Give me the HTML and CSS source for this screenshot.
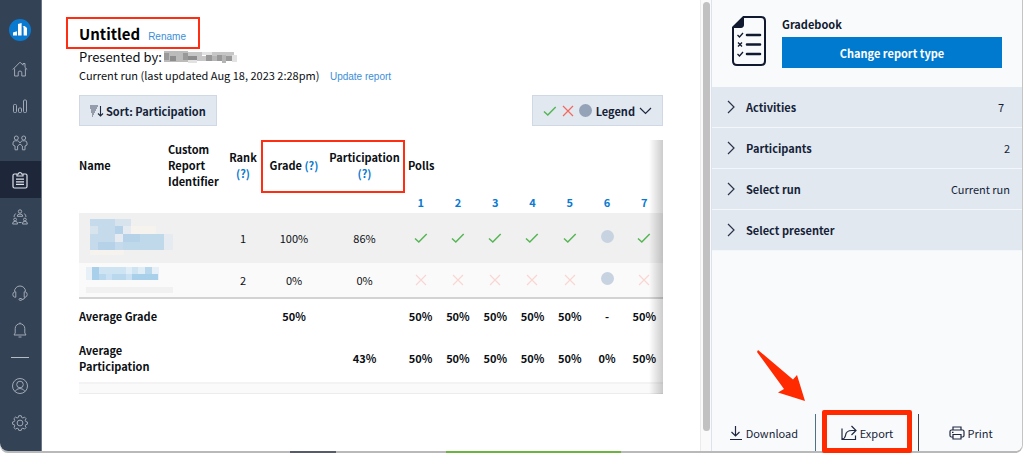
FILE: index.html
```html
<!DOCTYPE html>
<html lang="en">
<head>
  <meta charset="UTF-8" />
  <meta name="viewport" content="width=device-width, initial-scale=1.0" />
  <title>Gradebook report</title>
  <link rel="stylesheet" href="styles.css">
</head>
<body>
  <!-- shared icons -->
  <svg class="defs" aria-hidden="true">
    <symbol id="check" viewBox="0 0 14 14"><path d="M1 7.5 4.8 11 12.7 3" fill="none" stroke="#56b555" stroke-width="1.5"/></symbol>
    <symbol id="cross" viewBox="0 0 14 14"><path d="M2 2 12 12M12 2 2 12" fill="none" stroke="currentColor" stroke-width="1.2"/></symbol>
    <symbol id="chevron" viewBox="0 0 8 14"><path d="M1 1 7 7 1 13" fill="none" stroke="#2b3348" stroke-width="1.2"/></symbol>
  </svg>

  <div class="app">
    <nav class="sidebar">
      <a href="#" class="logo" aria-label="Home page">
        <svg viewBox="0 0 22 22" width="22" height="22"><circle cx="11" cy="11" r="11" fill="#0a7ad1"/><path d="M4 13.500 8 12.200V16.500H4zM9 5 12.600 4V16.500H9zM13.600 7.500l2-.5 2.400 2V16.500H14.600V8.500z" fill="#fff"/></svg>
      </a>
      <a href="#" aria-label="Home"><svg viewBox="0 0 16 16"><path d="M.8 8.500 8 1.200l3 3V2.500h2v4L15.200 8.500M2.600 7.500V15h3.600v-3.200a1.800 1.800 0 0 1 3.600 0V15h3.600V7.500"/></svg></a>
      <a href="#" aria-label="Activities"><svg viewBox="0 0 16 16"><rect x="1.500" y="6.500" width="3" height="8" rx="1"/><rect x="6.500" y="10" width="3" height="4.500" rx="1"/><rect x="11.500" y="2" width="3" height="12.500" rx="1"/></svg></a>
      <a href="#" aria-label="Participants"><svg viewBox="0 0 16 16"><circle cx="4.300" cy="3" r="2"/><circle cx="11.700" cy="3" r="2"/><path d="M3 14.800V11L1 10V8a2.200 2.200 0 0 1 2.200-2.200h2.400Q7 6 8 8q1-2 2.400-2.200h2.400A2.200 2.200 0 0 1 15 8v2l-2 1v3.800h-2.600V11L8 9l-2.400 2v3.800z"/></svg></a>
      <a href="#" class="active" aria-label="Reports"><svg viewBox="0 0 16 18" class="clipboard"><path d="M5 3H2.500Q1 3 1 4.500v11Q1 17 2.500 17h11q1.500 0 1.500-1.500v-11Q15 3 13.500 3H11M5 5V3h1.500a1.500 1.500 0 0 1 3 0H11v2zM4 8.200h8M4 10.800h8M4 13.400h8"/></svg></a>
      <a href="#" aria-label="Team"><svg viewBox="0 0 16 16"><circle cx="8" cy="2.500" r="1.700"/><path d="M5.200 7.300Q5.200 5 8 5t2.800 2.300zM.6 15q0-2.800 2.500-2.800T5.600 15zM10.400 15q0-2.800 2.500-2.800t2.500 2.800zM3.700 4.500Q2 6 2 8M12.300 4.500Q14 6 14 8M6.500 13.500h3"/><circle cx="3.100" cy="10.500" r="1.400"/><circle cx="12.900" cy="10.500" r="1.400"/></svg></a>
      <a href="#" class="push" aria-label="Support"><svg viewBox="0 0 16 16"><path d="M2.500 6.500a5.500 5.500 0 0 1 11 0M3.800 6.800v5.400h-1Q.8 11.800.8 9.500t2-2.700zM12.200 6.800v5.400h1q2-.4 2-2.700t-2-2.700zM13 12.200Q12.500 14.500 10 14.500"/><rect x="7" y="13.500" width="3" height="1.800" rx=".9"/></svg></a>
      <a href="#" aria-label="Notifications"><svg viewBox="0 0 16 16"><path d="M8 .5v1.300M2 13l1.200-2V6.500a4.800 4.800 0 0 1 9.600 0V11l1.200 2zM6.500 15h3"/></svg></a>
      <hr>
      <a href="#" aria-label="Account"><svg viewBox="0 0 16 16"><circle cx="8" cy="8" r="7.500"/><circle cx="8" cy="6.500" r="3.300"/><path d="M3 13.500q1.500-3 5-3t5 3"/></svg></a>
      <a href="#" aria-label="Settings"><svg viewBox="0 0 16 16"><circle cx="8" cy="8" r="2.900"/><path d="M6.800.7h2.400l.5 1.800 1.200.5 1.600-.9 1.600 1.600-.9 1.600.5 1.200 1.700.5v2.200l-1.700.5-.5 1.200.9 1.600-1.600 1.600-1.600-.9-1.200.5-.5 1.700H6.800l-.5-1.700-1.200-.5-1.600.9-1.600-1.600.9-1.600-.5-1.200-1.700-.5V7l1.700-.5.5-1.200-.9-1.600 1.600-1.600 1.600.9 1.200-.5z"/></svg></a>
    </nav>

    <main>
      <div class="title">
        <h1>Untitled</h1>
        <a href="#">Rename</a>
      </div>
      <p class="presenter">Presented by:
        <svg width="74" height="14" viewBox="0 0 74 14" aria-label="Hidden name"><path fill="#bbb" d="M0 1h24v11H0z"/><path fill="#999" d="M0 3h5v7H0zM19 3h5v7h-5z"/><path fill="#8d8d8d" d="M6 6h6v5H6zM24 6h9v4h-9z"/><path fill="#c6c6c6" d="M24 2h14v4H24zM33 6h9v5h-9zM48 2h22v4H48z"/><path fill="#999" d="M42 5h6v6h-6zM53 5h5v6h-5zM62 6h6v5h-6z"/><path fill="#b5b5b5" d="M48 6h5v5h-5zM58 5h4v8h-4z"/><path fill="#e2e2e2" d="M38 2h10v3H38zM68 5h5v7h-5zM24 10h9v3h-9z"/></svg>
      </p>
      <p class="run">Current run (last updated Aug 18, 2023 2:28pm) <a href="#">Update report</a></p>

      <div class="toolbar">
        <button type="button">
          <svg width="14" height="12" viewBox="0 0 14 12"><path d="M0 1h8M0 3h7M1 5h5M1 7h4M2 9h2M2 11h1" stroke="#4a5368" stroke-width="1.1"/><path d="M10.500 1v10M8 8.500l2.500 2.500L13 8.500" fill="none" stroke="#1f2840" stroke-width="1.100"/></svg>
          Sort: Participation
        </button>
        <button type="button" class="legend">
          <svg width="14" height="14"><use href="#check"/></svg>
          <svg width="14" height="14" class="red"><use href="#cross"/></svg>
          <span class="dot"></span>
          <span>Legend</span>
          <svg width="13" height="8" viewBox="0 0 13 8"><path d="M1 1 6.500 6.500 12 1" fill="none" stroke="#1f2840" stroke-width="1.200"/></svg>
        </button>
      </div>

      <div class="report">
        <table>
          <colgroup>
            <col class="c-name"><col class="c-id"><col class="c-rank"><col class="c-grade"><col class="c-part">
            <col span="7">
          </colgroup>
          <thead>
            <tr class="heads">
              <th class="left">Name</th>
              <th class="left">Custom Report Identifier</th>
              <th>Rank <a href="#">(?)</a></th>
              <th>Grade <a href="#">(?)</a></th>
              <th>Participation <a href="#">(?)</a></th>
              <th class="polls" colspan="7">Polls</th>
            </tr>
            <tr class="numbers">
              <td colspan="5"></td>
              <th><a href="#">1</a></th><th><a href="#">2</a></th><th><a href="#">3</a></th><th><a href="#">4</a></th><th><a href="#">5</a></th><th><a href="#">6</a></th><th><a href="#">7</a></th>
            </tr>
          </thead>
          <tbody>
            <tr class="first">
              <td colspan="2" class="left">
                <svg class="pixels" width="100" height="38" viewBox="0 0 100 38" aria-label="Hidden name"><path fill="#f6f2ee" d="M52 7h25v9H41V9h11zM11 31h34v5H11z"/><path fill="#c5dbeb" d="M11 0h33v31H11z"/><path fill="#d8e4ed" d="M36 0h16v7H36zM11 7h8v8h-8z"/><path fill="#e5ebf1" d="M36 15h8v8h-8zM85 15h9v16h-9zM44 7h8v8h-8z"/><path fill="#b5d2e8" d="M44 7h-8v8h8zM19 23h17v8H19zM44 15h17v8H44z"/><path fill="#bfd8ea" d="M44 23h41v8H44zM61 15h24v8H61z"/></svg>
              </td>
              <td>1</td><td>100%</td><td>86%</td>
              <td><svg width="14" height="14"><use href="#check"/></svg></td>
              <td><svg width="14" height="14"><use href="#check"/></svg></td>
              <td><svg width="14" height="14"><use href="#check"/></svg></td>
              <td><svg width="14" height="14"><use href="#check"/></svg></td>
              <td><svg width="14" height="14"><use href="#check"/></svg></td>
              <td><span class="dot"></span></td>
              <td><svg width="14" height="14"><use href="#check"/></svg></td>
            </tr>
            <tr class="second">
              <td colspan="2" class="left">
                <svg class="pixels" width="100" height="26" viewBox="0 0 100 26" aria-label="Hidden name"><path fill="#f1f1f1" d="M7 20h87v6H7z"/><path fill="#e7f0f6" d="M7 0h73v13H7z"/><path fill="#cfe4f3" d="M14 0h59v7H14z"/><path fill="#a9d0eb" d="M13 0h7v13h-7zM53 7h26v6H53z"/><path fill="#b9d8ee" d="M20 7h7v6h-7zM33 7h14v6H33zM66 0h7v7h-7z"/><path fill="#c9e1f2" d="M27 7h6v6h-6zM47 7h6v6h-6z"/><path fill="#dfedf7" d="M47 0h6v7h-6zM59 0h7v7h-7z"/></svg>
              </td>
              <td>2</td><td>0%</td><td>0%</td>
              <td><svg width="14" height="14"><use href="#cross"/></svg></td>
              <td><svg width="14" height="14"><use href="#cross"/></svg></td>
              <td><svg width="14" height="14"><use href="#cross"/></svg></td>
              <td><svg width="14" height="14"><use href="#cross"/></svg></td>
              <td><svg width="14" height="14"><use href="#cross"/></svg></td>
              <td><span class="dot"></span></td>
              <td><svg width="14" height="14"><use href="#cross"/></svg></td>
            </tr>
          </tbody>
          <tfoot>
            <tr class="avg-grade">
              <th class="left">Average Grade</th><td></td><td></td><td>50%</td><td></td>
              <td>50%</td><td>50%</td><td>50%</td><td>50%</td><td>50%</td><td>-</td><td>50%</td>
            </tr>
            <tr class="avg-part">
              <th class="left">Average Participation</th><td></td><td></td><td></td><td>43%</td>
              <td>50%</td><td>50%</td><td>50%</td><td>50%</td><td>50%</td><td>0%</td><td>50%</td>
            </tr>
          </tfoot>
        </table>
        <div class="table-scroll"></div>
      </div>
    </main>

    <div class="scrollbar"><div class="thumb"></div></div>

    <aside>
      <div class="type">
        <svg width="34" height="51" viewBox="0 0 34 51" fill="none" stroke="#10192f"><path d="M11.500 1H29q4 0 4 4v40q0 4-4 4H5q-4 0-4-4V11.500z" stroke-width="2"/><path d="M11.500 1V9q0 2.500-2.500 2.500H1z" fill="#10192f"/><path d="M15 19h13M15 28.500h13M15 38h13" stroke-width="2.600" stroke-linecap="round"/><path d="M5.500 19l2 2 3.500-4M6 26.500l4 4M10 26.500l-4 4M5.500 38l2 2 3.500-4" stroke-width="1.300"/></svg>
        <div class="type-info">
          <h2>Gradebook</h2>
          <button type="button">Change report type</button>
        </div>
      </div>
      <button type="button" class="row"><svg width="8" height="14"><use href="#chevron"/></svg><b>Activities</b><span class="count">7</span></button>
      <button type="button" class="row"><svg width="8" height="14"><use href="#chevron"/></svg><b>Participants</b><span>2</span></button>
      <button type="button" class="row"><svg width="8" height="14"><use href="#chevron"/></svg><b>Select run</b><span>Current run</span></button>
      <button type="button" class="row"><svg width="8" height="14"><use href="#chevron"/></svg><b>Select presenter</b></button>

      <svg class="arrow" width="50" height="54" viewBox="0 0 50 54"><path d="M1 3 2 1 37 30.500 41 26 49 52 22 43.500 28 40z" fill="#ff2a00"/></svg>
      <div class="actions">
        <button type="button"><svg width="14" height="16" viewBox="0 0 14 16"><path d="M6.500 1v10M2.500 7l4 4 4-4M1 14.500h12"/></svg>Download</button>
        <button type="button" class="export"><svg width="16" height="16" viewBox="0 0 16 16"><path d="M1 3.500v11h13.500V10.500M1 14.500Q4 13.500 4.500 10.500 5 5.500 11 5.500h3.500M10.500 1 15 5.500 10.500 10"/></svg>Export</button>
        <button type="button"><svg width="16" height="14" viewBox="0 0 16 14"><path d="M4 4V1h8v3M4 11H2.500Q1 11 1 9.500v-4Q1 4 2.500 4h11Q15 4 15 5.500v4q0 1.500-1.500 1.500H12M4 8.500h8V13H4zM3 6.300h1.500"/></svg>Print</button>
      </div>
    </aside>
  </div>
</body>
</html>
```

FILE: styles.css
```css
*, *::before, *::after {
  box-sizing: border-box;
}
body {
  margin: 0;
  background: #fff;
  color: #0c0f14;
  font-family: "Noto Sans CJK SC", "Open Sans", sans-serif;
  font-size: 11px;
  line-height: 16px;
}
h1, h2, p {
  margin: 0;
}
a {
  color: #0a7ad1;
  text-decoration: none;
}
button {
  font: inherit;
  color: #161f38;
  border: 0;
  background: none;
  padding: 0;
}
svg {
  display: block;
  flex: none;
}
.defs {
  position: absolute;
  width: 0;
  height: 0;
}
.app {
  display: flex;
  position: relative;
  height: calc(100vh - 16px);
  min-height: 440px;
  margin-right: 1px;
  border-right: 1px solid #c4c4c4;
  border-bottom: 2px solid #b9b9b9;
  border-radius: 0 0 8px 8px;
}
/* window edge with the dock showing through */
.app::after {
  content: "";
  position: absolute;
  top: 100%;
  left: 290px;
  width: 331px;
  height: 2px;
  background: linear-gradient(to right, #565c6b 46px, #b9b9b9 46px, #b9b9b9 156px, #6db33f 156px);
}

/* sidebar */
.sidebar {
  flex: none;
  display: flex;
  flex-direction: column;
  width: 42px;
  padding: 10px 0;
  background: #344256;
  border-right: 1px solid #6b7585;
  border-bottom-left-radius: 8px;
}
.sidebar a {
  flex: none;
  display: flex;
  align-items: center;
  justify-content: center;
  height: 37px;
  padding-right: 2px;
}
.sidebar a:not(.logo) svg {
  width: 16px;
  height: 16px;
  fill: none;
  stroke: #a0a9b6;
  stroke-width: 1;
}
.sidebar .logo {
  height: 40px;
}
.sidebar .active {
  background: #1e273a;
}
.sidebar .active .clipboard {
  height: 18px;
  stroke: #dfe3e9;
  stroke-width: 1.2;
}
.sidebar .push {
  margin-top: auto;
}
.sidebar hr {
  width: 18px;
  height: 1px;
  margin: 9px 11px;
  border: 0;
  background: #b5bcc6;
}

/* report */
main {
  flex: 1;
  min-width: 0;
  padding: 17px 37px 0;
}
.title {
  position: relative;
  display: flex;
  align-items: baseline;
  gap: 8px;
  width: max-content;
  height: 32px;
  padding-top: 5px;
}
.title::after {
  content: "";
  position: absolute;
  top: 0;
  left: -13px;
  right: -14px;
  bottom: 0;
  border: 2px solid #ff2d12;
}
h1 {
  font-size: 15px;
  line-height: 24px;
  color: #000;
}
.title a, .run a {
  font: 10px/16px "Liberation Sans", Arial, sans-serif;
  color: #3b8ed8;
}
.presenter {
  display: flex;
  align-items: center;
  gap: 2px;
  font-size: 13px;
}
.run {
  margin-top: 2px;
}
.run a {
  margin-left: 8px;
}
.toolbar {
  display: flex;
  justify-content: space-between;
  margin: 10px 0 14px;
}
.toolbar button {
  display: flex;
  align-items: center;
  gap: 2px;
  height: 31px;
  padding: 0 10px;
  border: 1px solid #cfd8e4;
  background: #e1e8f0;
  font-weight: bold;
}
.toolbar .legend {
  gap: 4px;
}
.red {
  color: #f4675c;
}
.dot {
  display: inline-block;
  width: 13px;
  height: 13px;
  border-radius: 50%;
  background: #c8d3e1;
}
.legend .dot {
  background: #94a3b8;
}
.report {
  position: relative;
}
.report::before {
  content: "";
  position: absolute;
  top: 0;
  right: 0;
  bottom: 0;
  width: 14px;
  background: linear-gradient(to right, transparent, rgba(0, 0, 0, 0.2));
}
/* frame round the two score columns */
.report::after {
  content: "";
  position: absolute;
  top: 0;
  left: 182px;
  width: 144px;
  height: 53px;
  border: 2px solid #ff2d12;
}
table {
  width: 100%;
  table-layout: fixed;
  border-collapse: collapse;
}
.c-name { width: 89px; }
.c-id { width: 57px; }
.c-rank { width: 36px; }
.c-grade { width: 66px; }
.c-part { width: 75px; }
th, td {
  padding: 0;
  text-align: center;
}
td svg {
  margin: 0 auto;
}
.left, .polls {
  text-align: left;
}
th.polls {
  padding-left: 6px;
}
.heads {
  height: 50px;
}
.numbers {
  height: 23px;
}
.first {
  height: 50px;
  background: #f0f0f0;
}
.second {
  height: 35px;
  background: #fafafa;
  border-bottom: 2px solid #d3d3d3;
}
.second svg {
  color: #f8d6d3;
}
.pixels {
  margin: 0;
}
.avg-grade {
  height: 35px;
}
.avg-part {
  height: 49px;
}
tfoot {
  font-weight: bold;
}
.table-scroll {
  height: 12px;
  background: #fafafa;
  border-top: 2px solid #f3f3f3;
  border-bottom: 1px solid #ececec;
}

.scrollbar {
  flex: none;
  width: 12px;
  padding: 2px;
  background: #fafafa;
  border-left: 1px solid #ebebeb;
  border-right: 1px solid #dde3ee;
}
.thumb {
  width: 7px;
  height: 96%;
  border-radius: 4px;
  background: #c1c1c1;
}

/* right panel */
aside {
  flex: none;
  display: flex;
  flex-direction: column;
  position: relative;
  width: 310px;
  background: #f9fafc;
  border-bottom-right-radius: 8px;
}
.type {
  display: flex;
  gap: 16px;
  padding: 16px 20px 19px;
}
.type-info {
  flex: 1;
}
h2 {
  margin-bottom: 5px;
  font-size: 11px;
  color: #10192f;
}
.type-info button {
  width: 100%;
  height: 31px;
  background: #007acf;
  color: #fff;
  font-weight: bold;
}
.row {
  display: flex;
  align-items: center;
  gap: 11px;
  height: 41px;
  padding: 0 12px 0 15px;
  background: #e1e8f0;
  border-bottom: 1px solid #f3f6fa;
}
.row span {
  margin-left: auto;
}
.row .count {
  margin-right: 6px;
}
.arrow {
  position: absolute;
  right: 216px;
  bottom: 48px;
}
.actions {
  display: flex;
  margin-top: auto;
  height: 37px;
}
.actions button {
  flex: 1;
  position: relative;
  display: flex;
  align-items: center;
  justify-content: center;
  gap: 3px;
}
.actions svg {
  fill: none;
  stroke: #1f2840;
  stroke-width: 1.2;
}
.actions .export {
  border-left: 1px solid #4b7286;
  border-right: 1px solid #3c424d;
}
.export::after {
  content: "";
  position: absolute;
  top: -4px;
  left: 6px;
  right: 6px;
  bottom: -2px;
  border: 5px solid #ff2a00;
  border-radius: 2px;
  z-index: 1;
}
```
